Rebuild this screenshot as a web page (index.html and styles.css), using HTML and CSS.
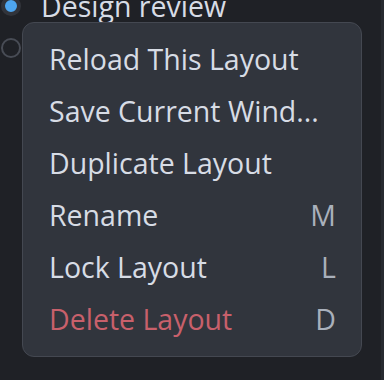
FILE: index.html
```html
<!DOCTYPE html>
<html>
<head>
<meta charset="utf-8">
<link rel="stylesheet" href="styles.css">
</head>
<body>
<div class="page">
  <div class="list">
    <div class="option"><span class="radio on"></span><span class="label">Design review</span></div>
    <div class="option"><span class="radio"></span></div>
  </div>
  <div class="strip"></div>
  <div class="menu">
    <div class="item"><span>Reload This Layout</span></div>
    <div class="item"><span>Save Current Wind...</span></div>
    <div class="item"><span>Duplicate Layout</span></div>
    <div class="item"><span>Rename</span><span class="key">M</span></div>
    <div class="item"><span>Lock Layout</span><span class="key">L</span></div>
    <div class="item danger"><span>Delete Layout</span><span class="key">D</span></div>
  </div>
</div>
</body>
</html>
```
FILE: styles.css
```css
html, body {
  margin: 0;
  padding: 0;
  background: #1f2126;
  width: 384px;
  height: 380px;
  overflow: hidden;
}
.page {
  position: relative;
  display: flow-root;
  width: 384px;
  height: 380px;
  font-family: "Open Sans", "Noto Sans", sans-serif;
  color: #d7dce5;
}
.strip {
  position: absolute;
  left: 381px;
  top: 0;
  width: 3px;
  height: 380px;
  background: #272a30;
}
.list {
  display: flex;
  flex-direction: column;
  gap: 2px;
  margin-top: -14px;
}
.option {
  display: flex;
  align-items: center;
  height: 40px;
}
.radio {
  width: 20px;
  height: 20px;
  border-radius: 50%;
  border: 2.5px solid #484c55;
  box-sizing: border-box;
  margin-left: 1px;
  flex: none;
}
.radio.on {
  border: 4px solid #31343b;
  background: #4ea6f0;
}
.label {
  font-size: 28.5px;
  margin-left: 20px;
}
.menu {
  position: absolute;
  left: 22px;
  top: 22px;
  width: 340px;
  height: 335px;
  box-sizing: border-box;
  background: #31353d;
  border: 1px solid #444851;
  border-radius: 12px;
  padding: 10px 25px 0 26px;
  display: flex;
  flex-direction: column;
}
.item {
  height: 52px;
  display: flex;
  align-items: center;
  justify-content: space-between;
  font-size: 28.5px;
  color: #d7dce5;
}
.key {
  color: #a9b0bb;
}
.danger span:first-child {
  color: #c8606b;
}
```
